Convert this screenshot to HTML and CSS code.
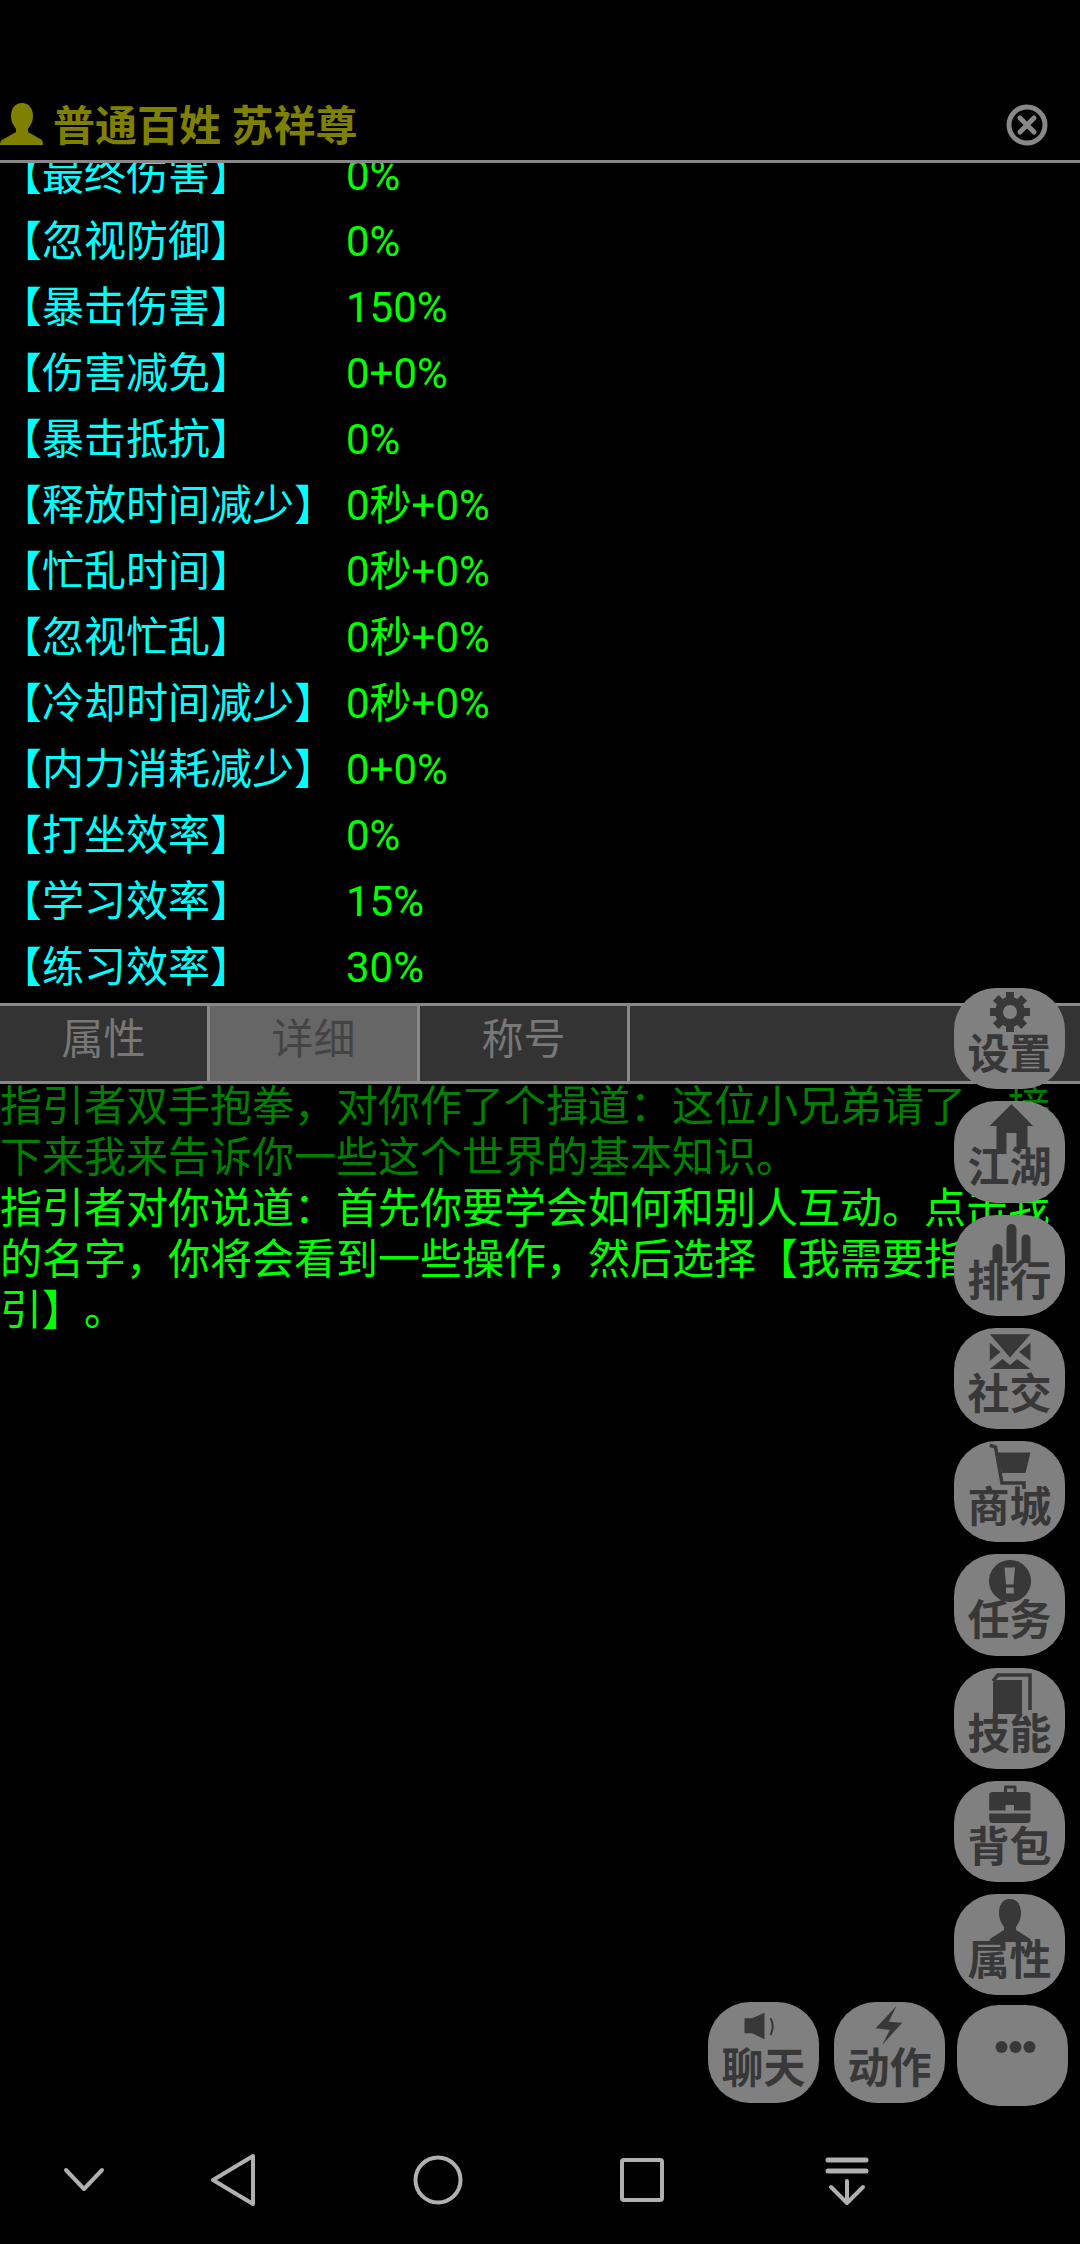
FILE: index.html
```html
<!DOCTYPE html>
<html lang="zh-CN">
<head>
    <meta charset="UTF-8">
    <title>普通百姓 苏祥尊</title>
    <link rel="stylesheet" href="styles.css">
</head>
<body>
    <div class="screen">
        <header class="title-bar">
            <svg class="title-icon" viewBox="0 0 44 44"><path d="M22 0C30 0 33 7 33 13C33 19 30 23 28 26L28 29L42 37Q43 38 43 42H0Q0 38 2 37L16 29L16 26C14 23 11 19 11 13C11 7 14 0 22 0Z"/></svg>
            <h1 class="title-text">普通百姓 苏祥尊</h1>
            <svg class="close-icon" viewBox="0 0 44 44"><circle cx="22" cy="22" r="18" /><path d="M15 15L29 29M29 15L15 29"/></svg>
        </header>

        <div class="stats">
            <div class="stat"><span class="stat-name">【最终伤害】</span><span class="stat-value">0%</span></div>
            <div class="stat"><span class="stat-name">【忽视防御】</span><span class="stat-value">0%</span></div>
            <div class="stat"><span class="stat-name">【暴击伤害】</span><span class="stat-value">150%</span></div>
            <div class="stat"><span class="stat-name">【伤害减免】</span><span class="stat-value">0+0%</span></div>
            <div class="stat"><span class="stat-name">【暴击抵抗】</span><span class="stat-value">0%</span></div>
            <div class="stat"><span class="stat-name">【释放时间减少】</span><span class="stat-value">0秒+0%</span></div>
            <div class="stat"><span class="stat-name">【忙乱时间】</span><span class="stat-value">0秒+0%</span></div>
            <div class="stat"><span class="stat-name">【忽视忙乱】</span><span class="stat-value">0秒+0%</span></div>
            <div class="stat"><span class="stat-name">【冷却时间减少】</span><span class="stat-value">0秒+0%</span></div>
            <div class="stat"><span class="stat-name">【内力消耗减少】</span><span class="stat-value">0+0%</span></div>
            <div class="stat"><span class="stat-name">【打坐效率】</span><span class="stat-value">0%</span></div>
            <div class="stat"><span class="stat-name">【学习效率】</span><span class="stat-value">15%</span></div>
            <div class="stat"><span class="stat-name">【练习效率】</span><span class="stat-value">30%</span></div>
        </div>

        <nav class="tabs">
            <div class="tab">属性</div>
            <div class="tab active">详细</div>
            <div class="tab">称号</div>
        </nav>

        <div class="log">
            <p class="log-old">指引者双手抱拳，对你作了个揖道：这位小兄弟请了，接下来我来告诉你一些这个世界的基本知识。</p>
            <p class="log-new">指引者对你说道：首先你要学会如何和别人互动。点击我的名字，你将会看到一些操作，然后选择【我需要指引】。</p>
        </div>

        <div class="nav-bar">
            <svg class="nav-down" viewBox="0 0 48 48"><path d="M6 14L24 33L42 14"/></svg>
            <svg viewBox="0 0 48 48"><path d="M43 0V48L3 24Z"/></svg>
            <svg viewBox="0 0 48 48"><circle cx="24" cy="24" r="22.500"/></svg>
            <svg viewBox="0 0 48 48"><rect x="4" y="4" width="40" height="40" rx="2"/></svg>
            <svg viewBox="0 0 48 48"><path class="thick" d="M6 4H44M6 15H44"/><path d="M25 25V47M9 31L25 47L41 31"/></svg>
        </div>

        <!-- floating menu on the right -->
        <div class="side-menu">
            <div class="menu-btn">
                <svg viewBox="0 0 44 44"><circle class="ring" cx="22" cy="22" r="11"/><g>
                    <rect x="18" y="2" width="8" height="7"/>
                    <rect x="18" y="2" width="8" height="7" transform="rotate(45 22 22)"/>
                    <rect x="18" y="2" width="8" height="7" transform="rotate(90 22 22)"/>
                    <rect x="18" y="2" width="8" height="7" transform="rotate(135 22 22)"/>
                    <rect x="18" y="2" width="8" height="7" transform="rotate(180 22 22)"/>
                    <rect x="18" y="2" width="8" height="7" transform="rotate(225 22 22)"/>
                    <rect x="18" y="2" width="8" height="7" transform="rotate(270 22 22)"/>
                    <rect x="18" y="2" width="8" height="7" transform="rotate(315 22 22)"/>
                </g></svg>
                <span>设置</span>
            </div>
            <div class="menu-btn">
                <svg viewBox="0 0 44 44"><path d="M23.500 1L45 23H39.500V46H28.500V30H18.500V46H8.500V23H1.500Z"/></svg>
                <span>江湖</span>
            </div>
            <div class="menu-btn">
                <svg viewBox="0 0 44 44"><path d="M4.500 46V32a5 5 0 0 1 10 0V46ZM18.500 46V12a5 5 0 0 1 10 0V46ZM33.500 46V22a4.500 4.500 0 0 1 9 0V46Z"/></svg>
                <span>排行</span>
            </div>
            <div class="menu-btn">
                <svg viewBox="0 0 44 44"><path d="M1.800 4.300H42.500L22 27.500ZM1.800 12.700V31L12.500 22ZM42.500 12.700V31L31 22ZM1.800 39H42.500L29 29L22 35L14.500 29Z"/></svg>
                <span>社交</span>
            </div>
            <div class="menu-btn">
                <svg viewBox="0 0 44 44"><path d="M9.200 9.400H42.500L37.500 30H14Z"/><path class="line" d="M1.800 2.300L7.500 4L14 40H36V46"/></svg>
                <span>商城</span>
            </div>
            <div class="menu-btn">
                <svg viewBox="0 0 44 44"><path fill-rule="evenodd" d="M22 4a21 21 0 1 0 0.010 0ZM16.500 11.500H27L25.500 28.500H18ZM18 31.500H25.800V37.500H18Z"/></svg>
                <span>任务</span>
            </div>
            <div class="menu-btn">
                <svg viewBox="0 0 44 44"><path d="M5 13Q5 10 10 10H34V44H5Z"/><path class="line" d="M5 11L10 5H42V40"/></svg>
                <span>技能</span>
            </div>
            <div class="menu-btn">
                <svg viewBox="0 0 44 44"><path fill-rule="evenodd" d="M16 9V4Q16 2.600 18 2.600H26.500Q28.500 2.600 28.500 4V9H39Q42.500 9 42.500 12V27.500H26V22H17.500V27.500H1.200V12Q1.200 9 5 9ZM19 9H25.500V5.500H19Z"/><path d="M1.200 30.500H42.500V36Q42.500 40 39 40H5Q1.200 40 1.200 36Z"/></svg>
                <span>背包</span>
            </div>
            <div class="menu-btn">
                <svg viewBox="0 0 44 44"><path d="M22 3C30 3 33 10 33 17C33 24 30 28 28 31V34L42.500 43V46H1.800V43L16 34V31C14 28 11 24 11 17C11 10 14 3 22 3Z"/></svg>
                <span>属性</span>
            </div>
        </div>

        <div class="bottom-menu">
            <div class="menu-btn">
                <svg viewBox="0 0 44 44"><path d="M2.500 14.300H10L22.500 8.700V35.300L10 29.300H2.500Z"/><path class="arc" d="M28.500 14.300Q33 22 28.500 31"/></svg>
                <span>聊天</span>
            </div>
            <div class="menu-btn">
                <svg viewBox="0 0 44 44"><path d="M28.500 2L7.500 24.300L21.800 26L14.200 41L34.200 18.700L20.800 17.700Z"/></svg>
                <span>动作</span>
            </div>
            <div class="menu-btn more-btn">
                <svg viewBox="0 0 44 44"><circle cx="10.500" cy="40" r="6"/><circle cx="24.500" cy="40" r="6"/><circle cx="38.500" cy="40" r="6"/></svg>
            </div>
        </div>
    </div>
</body>
</html>
```

FILE: styles.css
```css
* {
    box-sizing: border-box;
}
body {
    margin: 0;
    background-color: #000;
    font-family: Roboto, "Noto Sans CJK SC", sans-serif;
    text-spacing-trim: space-all;
}
.screen {
    position: relative;
    display: flex;
    flex-direction: column;
    width: 1080px;
    height: 2244px;
    padding-top: 100px;
    overflow: hidden;
    background-color: #000;
}

/* title */
.title-bar {
    display: flex;
    align-items: center;
    flex: none;
    height: 63px;
    padding-right: 31px;
    border-bottom: 3px solid #888;
    color: #808000;
}
.title-icon {
    width: 44px;
    height: 44px;
    margin-top: -11px;
    fill: #808000;
}
.title-text {
    flex: 1;
    margin: -7px 0 0 9px;
    font-size: 42px;
    line-height: 50px;
    font-weight: bold;
}
.close-icon {
    width: 44px;
    height: 44px;
    margin-top: -10px;
    fill: none;
    stroke: #888;
    stroke-width: 5;
    stroke-linecap: round;
}

/* stats list */
.stats {
    display: flex;
    flex-direction: column;
    justify-content: flex-end;
    flex: none;
    height: 840px;
    padding-bottom: 2px;
    overflow: hidden;
    font-size: 42px;
}
.stat {
    display: flex;
    align-items: baseline;
    flex: none;
    height: 66px;
    line-height: 66px;
}
.stat-name {
    width: 346px;
    color: #00ffff;
}
.stat-value {
    color: #00ff00;
}

/* tabs */
.tabs {
    display: flex;
    flex: none;
    height: 81px;
    border-top: 3px solid #888;
    border-bottom: 3px solid #888;
    background-color: #333;
}
.tab {
    width: 210px;
    border-right: 3px solid #888;
    font-size: 42px;
    line-height: 68px;
    text-align: center;
    color: #777;
}
.tab.active {
    background-color: #666;
    color: #444;
}

/* message log */
.log {
    flex: 1;
    margin-top: -3px;
    overflow: hidden;
    font-size: 42px;
    line-height: 51px;
}
.log p {
    margin: 0;
}
.log-old {
    color: #008000;
}
.log-new {
    color: #00ff00;
}

/* round grey buttons */
.side-menu {
    position: absolute;
    top: 988px;
    right: 15px;
    display: flex;
    flex-direction: column;
    gap: 12px;
}
.bottom-menu {
    position: absolute;
    top: 2002px;
    left: 708px;
    display: flex;
    gap: 15px;
}
.menu-btn {
    display: flex;
    flex-direction: column;
    align-items: center;
    width: 111px;
    height: 101.250px;
    padding-top: 2px;
    border-radius: 42px;
    background-color: #808080;
    color: #383838;
    font-size: 42px;
    font-weight: bold;
    line-height: 40px;
}
.menu-btn svg {
    flex: none;
    width: 44px;
    height: 44px;
    margin-bottom: 1px;
    overflow: visible;
    fill: #383838;
}
.menu-btn .ring {
    fill: none;
    stroke: #383838;
    stroke-width: 8;
}
.menu-btn .line {
    fill: none;
    stroke: #383838;
    stroke-width: 3.500;
}
.menu-btn .arc {
    fill: none;
    stroke: #383838;
    stroke-width: 2;
}
.more-btn {
    margin: 3px 0 0 -3px;
}

/* phone nav */
.nav-bar {
    position: absolute;
    top: 2156px;
    left: 60px;
    display: flex;
    gap: 156px;
}
.nav-bar svg {
    width: 48px;
    height: 48px;
    overflow: visible;
    fill: none;
    stroke: #b0b0b0;
    stroke-width: 4;
    stroke-linejoin: round;
    stroke-linecap: round;
}
.nav-bar .nav-down {
    margin-right: -54px;
}
.nav-bar .thick {
    stroke-width: 5;
}
```
